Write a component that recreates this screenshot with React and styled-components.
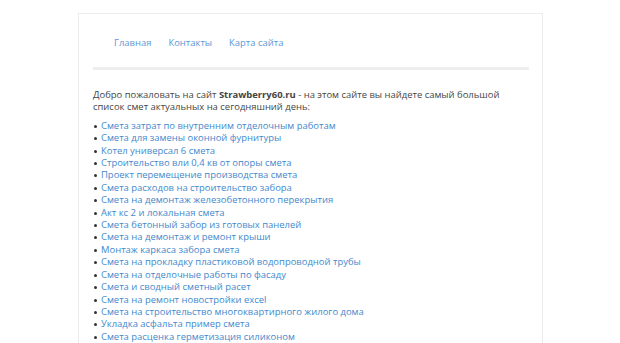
import styled, { createGlobalStyle } from 'styled-components';

const GlobalStyle = createGlobalStyle`
  body {
    margin: 0;
    background: #fff;
    font-family: "Open Sans", "DejaVu Sans", sans-serif;
    color: #444;
  }
`;

const links = [
  'Смета затрат по внутренним отделочным работам',
  'Смета для замены оконной фурнитуры',
  'Котел универсал 6 смета',
  'Строительство вли 0,4 кв от опоры смета',
  'Проект перемещение производства смета',
  'Смета расходов на строительство забора',
  'Смета на демонтаж железобетонного перекрытия',
  'Акт кс 2 и локальная смета',
  'Смета бетонный забор из готовых панелей',
  'Смета на демонтаж и ремонт крыши',
  'Монтаж каркаса забора смета',
  'Смета на прокладку пластиковой водопроводной трубы',
  'Смета на отделочные работы по фасаду',
  'Смета и сводный сметный расет',
  'Смета на ремонт новостройки excel',
  'Смета на строительство многоквартирного жилого дома',
  'Укладка асфальта пример смета',
  'Смета расценка герметизация силиконом',
  'Смета на монтаж натяжного потолка',
];

const App = () => {
  return (
    <>
      <GlobalStyle />
      <Page>
        <Box>
          <Nav>
            <NavLink href="#">Главная</NavLink>
            <NavLink href="#">Контакты</NavLink>
            <NavLink href="#">Карта сайта</NavLink>
          </Nav>
          <Divider />
          <Intro>
            Добро пожаловать на сайт <b>Strawberry60.ru</b> - на этом сайте вы найдете самый большой
            список смет актуальных на сегодняшний день:
          </Intro>
          <List>
            {links.map(text => (
              <Item key={text}>
                <ItemLink href="#">{text}</ItemLink>
              </Item>
            ))}
          </List>
        </Box>
      </Page>
    </>
  );
};

const Page = styled.div`
  padding: 13px 0 0 78px;
`;

const Box = styled.div`
  width: 436px;
  padding: 0 13px 20px 14px;
  border: 1px solid #ececec;
  border-bottom: none;
  font-size: 9.45px;
  line-height: 12.4px;
`;

const Nav = styled.nav`
  display: flex;
  gap: 17px;
  padding: 23px 0 0 21px;
  height: 30px;
`;

const NavLink = styled.a`
  color: #5b97d5;
  text-decoration: none;
`;

const Divider = styled.div`
  height: 3px;
  background: #eee;
`;

const Intro = styled.p`
  margin: 19px 0 6px;
  width: 420px;
`;

const List = styled.ul`
  margin: 0;
  padding: 0 0 0 8px;
  list-style: none;
`;

const Item = styled.li`
  position: relative;

  &::before {
    content: '';
    position: absolute;
    left: -7px;
    top: 5px;
    width: 3px;
    height: 3px;
    border-radius: 50%;
    background: #333;
  }
`;

const ItemLink = styled.a`
  color: #3f88cc;
  text-decoration: none;
`;

export default App;
